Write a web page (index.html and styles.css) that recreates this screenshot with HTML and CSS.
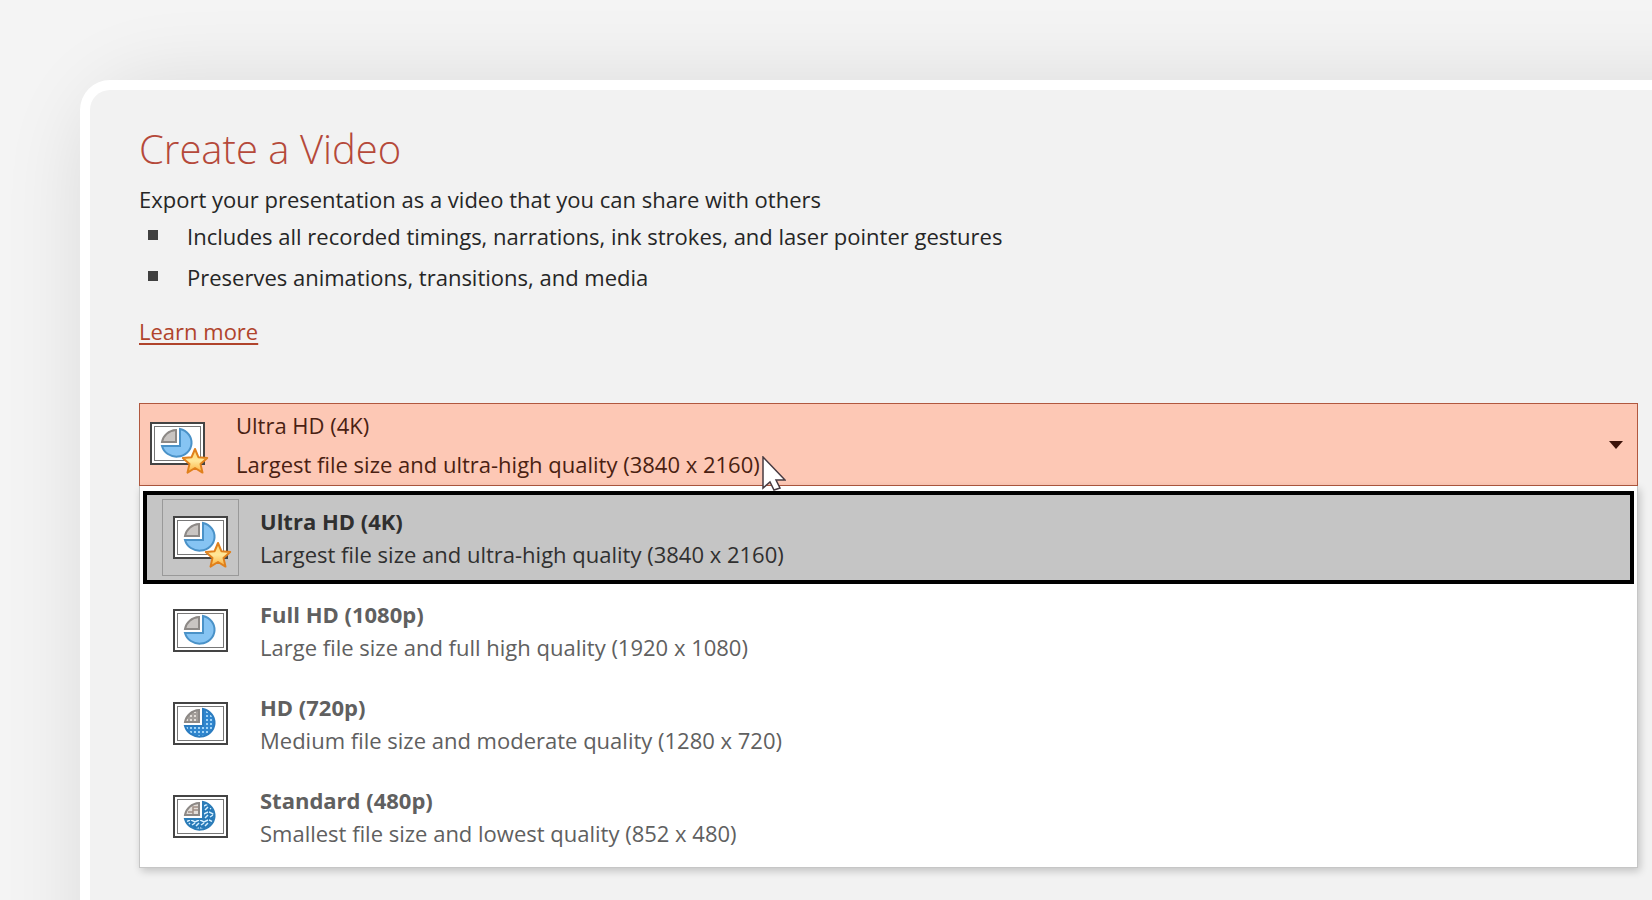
FILE: index.html
```html
<!DOCTYPE html>
<html lang="en">
<head>
<meta charset="utf-8">
<title>Create a Video</title>
<meta name="viewport" content="width=device-width, initial-scale=1">
<link rel="stylesheet" href="styles.css">
</head>
<body>
<svg class="defs" aria-hidden="true">
  <defs>
    <pattern id="dots" width="4" height="4" patternUnits="userSpaceOnUse">
      <rect width="4" height="4" fill="#2f86cf"/><rect x="1" y="1" width="2" height="2" fill="#9fd3f7"/>
    </pattern>
    <pattern id="dots-gray" width="4" height="4" patternUnits="userSpaceOnUse">
      <rect width="4" height="4" fill="#a39e9a"/><rect x="1" y="1" width="2" height="2" fill="#e3ded9"/>
    </pattern>
    <pattern id="rough" width="9" height="8" patternUnits="userSpaceOnUse">
      <rect width="9" height="8" fill="#2679b8"/><path d="M0 1l4 2 4-2M1 6l3-2M5 7l3-3" stroke="#d5efff" stroke-width="1.5" fill="none"/>
    </pattern>
    <linearGradient id="gold" x1="0" y1="0" x2="0" y2="1">
      <stop offset="0" stop-color="#ffd36b"/><stop offset=".5" stop-color="#ffe79a"/><stop offset="1" stop-color="#fbb13c"/>
    </linearGradient>
    <symbol id="frame" viewBox="0 0 60 54">
      <rect x="1" y="1" width="53" height="41" fill="#fff" stroke="#444" stroke-width="2"/>
      <rect x="4.5" y="4.5" width="46" height="34" fill="#fff" stroke="#777"/>
    </symbol>
    <symbol id="star" viewBox="0 0 60 54">
      <path d="M45 27l3.400 8.200 8.800.8-6.700 5.900 2 8.700-7.500-4.600-7.500 4.600 2-8.700-6.700-5.900 8.800-.8z" fill="url(#gold)" stroke="#e0801c" stroke-width="2" stroke-linejoin="round"/>
    </symbol>
  </defs>
</svg>
<main class="card">
  <h1 class="title">Create a Video</h1>
  <p class="lead">Export your presentation as a video that you can share with others</p>
  <ul class="features">
    <li>Includes all recorded timings, narrations, ink strokes, and laser pointer gestures</li>
    <li>Preserves animations, transitions, and media</li>
  </ul>
  <a class="more" href="#">Learn more</a>

  <div class="picker">
    <button class="combo" type="button" aria-haspopup="listbox" aria-expanded="true" aria-controls="quality">
      <svg class="icon" viewBox="0 0 60 54" aria-hidden="true">
        <use href="#frame"/>
        <path d="M30 7A15 14 0 1 1 12 24H30z" fill="#86c4f3" stroke="#4a92c8" stroke-width="2"/>
        <path d="M26 8v12H12A15 14 0 0 1 26 8z" fill="#c9c5c2" stroke="#8d8986" stroke-width="2"/>
        <use href="#star"/>
      </svg>
      <span class="combo-text"><span>Ultra HD (4K)</span><span>Largest file size and ultra-high quality (3840 x 2160)</span></span>
      <svg class="arrow" viewBox="0 0 14 8" aria-hidden="true"><path d="M0 0h14L7 8z" fill="#3b130a"/></svg>
    </button>

    <div class="list" id="quality" role="listbox" aria-label="Video quality">
      <button class="option selected" type="button" role="option" aria-selected="true">
        <span class="thumb">
          <svg class="icon" viewBox="0 0 60 54" aria-hidden="true">
            <use href="#frame"/>
            <path d="M30 7A15 14 0 1 1 12 24H30z" fill="#86c4f3" stroke="#4a92c8" stroke-width="2"/>
            <path d="M26 8v12H12A15 14 0 0 1 26 8z" fill="#c9c5c2" stroke="#8d8986" stroke-width="2"/>
            <use href="#star"/>
          </svg>
        </span>
        <span class="option-text"><strong>Ultra HD (4K)</strong><span>Largest file size and ultra-high quality (3840 x 2160)</span></span>
      </button>
      <button class="option" type="button" role="option" aria-selected="false">
        <span class="thumb">
          <svg class="icon" viewBox="0 0 60 54" aria-hidden="true">
            <use href="#frame"/>
            <path d="M30 7A15 14 0 1 1 12 24H30z" fill="#86c4f3" stroke="#4a92c8" stroke-width="2"/>
            <path d="M26 8v12H12A15 14 0 0 1 26 8z" fill="#c9c5c2" stroke="#8d8986" stroke-width="2"/>
          </svg>
        </span>
        <span class="option-text"><strong>Full HD (1080p)</strong><span>Large file size and full high quality (1920 x 1080)</span></span>
      </button>
      <button class="option" type="button" role="option" aria-selected="false">
        <span class="thumb">
          <svg class="icon" viewBox="0 0 60 54" aria-hidden="true">
            <use href="#frame"/>
            <path d="M30 7A15 14 0 1 1 12 24H30z" fill="url(#dots)" stroke="#2b7cc0" stroke-width="2"/>
            <path d="M26 8v12H12A15 14 0 0 1 26 8z" fill="url(#dots-gray)" stroke="#8d8986" stroke-width="2"/>
          </svg>
        </span>
        <span class="option-text"><strong>HD (720p)</strong><span>Medium file size and moderate quality (1280 x 720)</span></span>
      </button>
      <button class="option" type="button" role="option" aria-selected="false">
        <span class="thumb">
          <svg class="icon" viewBox="0 0 60 54" aria-hidden="true">
            <use href="#frame"/>
            <path d="M30 7A15 14 0 1 1 12 24H30z" fill="url(#rough)" stroke="#2b7cb8" stroke-width="2"/>
            <path d="M26 8v12H12A15 14 0 0 1 26 8z" fill="#e3ded9" stroke="#8d8986" stroke-width="2"/>
            <path d="M15 17h5v-5h5M20 19v-4h5" fill="none" stroke="#a08f85" stroke-width="1.5"/>
          </svg>
        </span>
        <span class="option-text"><strong>Standard (480p)</strong><span>Smallest file size and lowest quality (852 x 480)</span></span>
      </button>
    </div>
    <svg class="cursor" viewBox="0 0 24 36" aria-hidden="true"><path d="M1 1v31l7-6 4 8 6-2-4-8h9z" fill="#fff" stroke="#473b42" stroke-width="1.5"/></svg>
  </div>
</main>
</body>
</html>
```
FILE: styles.css
```css
* { box-sizing: border-box; }

body {
  margin: 0;
  padding: 80px 0 0 80px;
  min-height: 100vh;
  display: flex;
  background: #f4f4f4;
  color: #262626;
  font: 22px/32px "Open Sans", "Noto Sans", sans-serif;
}

.defs { position: absolute; width: 0; height: 0; }

/* Offset and spread cancel out on the top and left, so the shadow stays even up to the window edges. */
.card {
  flex: 1;
  padding: 34px 14px 20px 49px;
  border: 10px solid #fff;
  border-width: 10px 0 0 10px;
  border-top-left-radius: 30px;
  background: #f2f2f2;
  box-shadow: 60px 60px 80px 60px rgba(0, 0, 0, 0.1);
}

.title {
  margin: 0;
  color: #b5493a;
  font-size: 40px;
  font-weight: 300;
  line-height: 50px;
}

.lead { margin: 9px 0 5px; }

.features {
  display: grid;
  gap: 9px;
  margin: 0 0 22px;
  padding: 0;
  list-style: none;
}

.features li { display: flex; padding-left: 9px; }

.features li::before {
  content: "";
  flex: none;
  width: 10px;
  height: 10px;
  margin: 10px 29px 0 0;
  background: #404040;
}

.more {
  display: table;
  color: #b0442c;
  text-decoration-thickness: 2px;
  text-underline-offset: 3px;
}

.picker { position: relative; margin-top: 56px; }

button {
  display: flex;
  align-items: center;
  width: 100%;
  border: 0;
  background: none;
  color: inherit;
  font: inherit;
  text-align: left;
}

.combo {
  height: 83px;
  padding: 0 14px 0 10px;
  border: 1px solid #b0583f;
  background: #fdc8b5;
  color: #4a1f12;
}

.icon { flex: none; width: 60px; height: 54px; }

.combo .icon { margin-top: 8px; }

.combo-text {
  display: grid;
  flex: 1;
  padding-left: 26px;
  line-height: 39px;
}

.arrow { width: 14px; height: 8px; }

.cursor {
  position: absolute;
  left: 623px;
  top: 53px;
  width: 24px;
  height: 36px;
}

.list {
  padding: 5px 3px 4px;
  border: 1px solid #c6c6c6;
  border-top: 0;
  background: #fff;
  box-shadow: 2px 3px 8px rgba(0, 0, 0, 0.2);
}

.option {
  height: 93px;
  padding: 0 15px;
  border: 4px solid transparent;
  color: #606060;
}

.selected {
  border-color: #000;
  background: #c5c5c5;
  color: #303030;
}

.thumb {
  display: flex;
  padding: 16px 5px 5px 10px;
  border: 1px solid transparent;
}

.selected .thumb { border-color: #999; }

.option-text {
  display: grid;
  padding-left: 21px;
  line-height: 33px;
}
```
